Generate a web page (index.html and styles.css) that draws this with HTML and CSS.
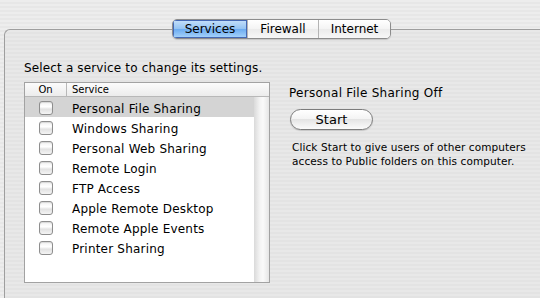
FILE: index.html
```html
<!DOCTYPE html>
<html lang="en">

<head>
    <meta charset="UTF-8">
    <title>Sharing</title>
    <link rel="stylesheet" href="styles.css">
</head>

<body>
    <div class="window">
        <div class="tabs">
            <div class="tab selected">Services</div>
            <div class="tab">Firewall</div>
            <div class="tab">Internet</div>
        </div>
        <div class="panel">
            <div class="left-col">
                <div class="label">Select a service to change its settings.</div>
                <div class="service-table">
                    <div class="table-header">
                        <div class="col-on">On</div>
                        <div class="col-service">Service</div>
                    </div>
                    <div class="table-body">
                        <div class="rows">
                            <div class="row selected">
                                <div class="col-on"><span class="checkbox"></span></div>
                                <div class="col-service">Personal File Sharing</div>
                            </div>
                            <div class="row">
                                <div class="col-on"><span class="checkbox"></span></div>
                                <div class="col-service">Windows Sharing</div>
                            </div>
                            <div class="row">
                                <div class="col-on"><span class="checkbox"></span></div>
                                <div class="col-service">Personal Web Sharing</div>
                            </div>
                            <div class="row">
                                <div class="col-on"><span class="checkbox"></span></div>
                                <div class="col-service">Remote Login</div>
                            </div>
                            <div class="row">
                                <div class="col-on"><span class="checkbox"></span></div>
                                <div class="col-service">FTP Access</div>
                            </div>
                            <div class="row">
                                <div class="col-on"><span class="checkbox"></span></div>
                                <div class="col-service">Apple Remote Desktop</div>
                            </div>
                            <div class="row">
                                <div class="col-on"><span class="checkbox"></span></div>
                                <div class="col-service">Remote Apple Events</div>
                            </div>
                            <div class="row">
                                <div class="col-on"><span class="checkbox"></span></div>
                                <div class="col-service">Printer Sharing</div>
                            </div>
                        </div>
                        <div class="scroll-track"></div>
                    </div>
                </div>
            </div>
            <div class="right-col">
                <div class="status">Personal File Sharing Off</div>
                <button class="start-btn">Start</button>
                <p class="help">Click Start to give users of other computers access to Public folders on this computer.</p>
            </div>
        </div>
    </div>
</body>

</html>
```

FILE: styles.css
```css
body,
html {
    margin: 0;
    padding: 0;
    font-family: 'DejaVu Sans', 'Noto Sans', sans-serif;
    color: #000;
}

body {
    width: 540px;
    height: 298px;
    overflow: hidden;
    background: repeating-linear-gradient(#ededed 0 2px, #e7e7e7 2px 4px);
}

.window {
    padding-top: 19px;
}

.tabs {
    position: relative;
    z-index: 2;
    display: flex;
    width: 219px;
    height: 20px;
    margin-left: 172px;
    box-sizing: border-box;
    border: 1px solid #8c8c8c;
    border-radius: 5px;
    overflow: hidden;
    box-shadow: 0 1px 1px rgba(0, 0, 0, 0.15);
}

.tab {
    flex: 0 0 auto;
    display: flex;
    align-items: center;
    justify-content: center;
    font-size: 12px;
    background: linear-gradient(#ffffff, #f4f4f4 50%, #ebebeb 50%, #f7f7f7);
    border-left: 1px solid #b4b4b4;
}

.tab:nth-child(1) {
    width: 74px;
    border-left: none;
}

.tab:nth-child(2) {
    width: 70px;
}

.tab:nth-child(3) {
    flex-grow: 1;
}

.tab.selected {
    background: linear-gradient(#c6e0fa, #93c3f3 50%, #6aaaf0 50%, #a9d5fb);
    box-shadow: inset 0 0 0 1px #4468b4;
}

.panel {
    display: flex;
    margin: -10px 0 0 4px;
    height: 269px;
    box-sizing: border-box;
    padding: 30px 0 0 19px;
    border: 1px solid #9e9e9e;
    border-right: none;
    border-bottom: none;
    border-radius: 6px 0 0 0;
    background: repeating-linear-gradient(#e8e8e8 0 2px, #e3e3e3 2px 4px);
}

.label {
    font-size: 12px;
    letter-spacing: 0.15px;
    line-height: 16px;
}

.service-table {
    margin-top: 6px;
    width: 246px;
    height: 201px;
    box-sizing: border-box;
    border: 1px solid #a2a2a2;
    background-color: white;
    display: flex;
    flex-direction: column;
}

.table-header {
    display: flex;
    height: 14px;
    flex: 0 0 auto;
    box-sizing: border-box;
    border-bottom: 1px solid #b8b8b8;
    background: linear-gradient(#fbfbfb, #ececec);
    font-size: 10px;
    line-height: 13px;
}

.table-header .col-on {
    border-right: 1px solid #b8b8b8;
    box-sizing: border-box;
    text-align: center;
}

.col-on {
    width: 42px;
    flex: 0 0 auto;
    display: flex;
    justify-content: center;
    align-items: center;
}

.col-service {
    padding-left: 5px;
}

.table-body {
    flex-grow: 1;
    display: flex;
}

.rows {
    flex-grow: 1;
}

.scroll-track {
    width: 15px;
    background: linear-gradient(to right, #dadada, #f4f4f4 40%, #fafafa 60%, #e6e6e6);
}

.row {
    display: flex;
    align-items: center;
    height: 20px;
    font-size: 12px;
    letter-spacing: 0.2px;
}

.row .col-service {
    padding-top: 3px;
}

.row.selected {
    background-color: #d4d4d4;
}

.checkbox {
    display: block;
    width: 14px;
    height: 14px;
    margin-top: 1px;
    box-sizing: border-box;
    border: 1px solid #8e8e8e;
    border-radius: 3px;
    background: linear-gradient(#f2f2f2, #ffffff 40%, #e2e2e2 60%, #f4f4f4);
    box-shadow: inset 0 1px 1px rgba(0, 0, 0, 0.12);
}

.right-col {
    margin-left: 19px;
    padding-top: 25px;
}

.status {
    font-size: 12px;
    letter-spacing: 0.28px;
    line-height: 16px;
}

.start-btn {
    display: block;
    margin: 8px 0 0 1px;
    width: 83px;
    height: 21px;
    padding: 0;
    border: 1px solid #7c7c7c;
    border-radius: 11px;
    font-family: inherit;
    font-size: 13px;
    background: linear-gradient(#ffffff, #f3f3f3 50%, #e4e4e4 50%, #fbfbfb);
    box-shadow: 0 1px 1px rgba(0, 0, 0, 0.15);
}

.help {
    margin: 10px 0 0 3px;
    width: 245px;
    font-size: 10.5px;
    letter-spacing: 0.1px;
    line-height: 14px;
}
```
